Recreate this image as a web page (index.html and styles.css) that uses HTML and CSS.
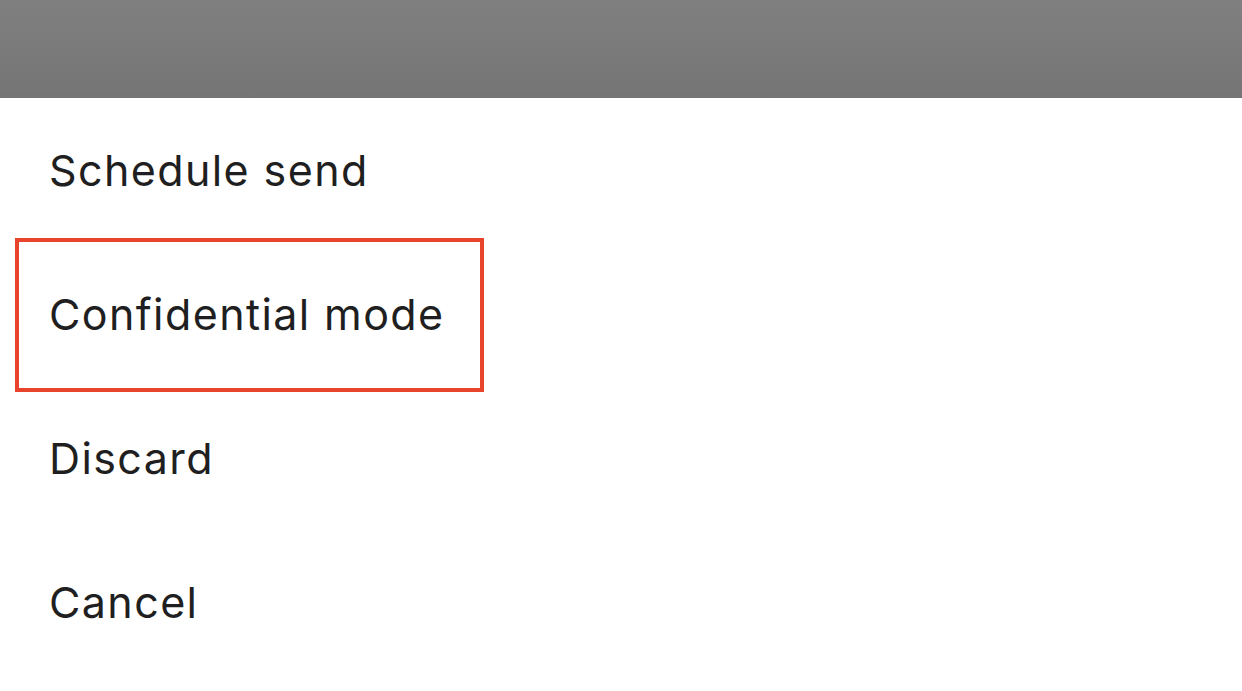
FILE: index.html
```html
<!DOCTYPE html>
<html lang="en">
<head>
    <meta charset="UTF-8">
    <meta name="viewport" content="width=device-width, initial-scale=1.0">
    <title>Compose options</title>
    <link rel="stylesheet" href="styles.css">
</head>
<body>
    <div class="backdrop"></div>
    <ul class="sheet">
        <li class="sheet-item">Schedule send</li>
        <li class="sheet-item">
            Confidential mode
            <span class="highlight"></span>
        </li>
        <li class="sheet-item">Discard</li>
        <li class="sheet-item">Cancel</li>
    </ul>
</body>
</html>
```

FILE: styles.css
```css
body {
    margin: 0;
    font-family: Inter, "Noto Sans", sans-serif;
    background: #fff;
    height: 691px;
    overflow: hidden;
}
.backdrop {
    height: 98px;
    background: linear-gradient(#808080, #757575);
}
.sheet {
    list-style: none;
    margin: 0;
    padding: 0;
}
.sheet-item {
    position: relative;
    height: 144px;
    display: flex;
    align-items: center;
    padding-left: 49px;
    font-size: 43px;
    letter-spacing: 1.4px;
    color: #1f1f21;
}
.highlight {
    position: absolute;
    left: 15px;
    top: -4px;
    width: 469px;
    height: 154px;
    border: 4px solid #e8442c;
    box-sizing: border-box;
}
```
